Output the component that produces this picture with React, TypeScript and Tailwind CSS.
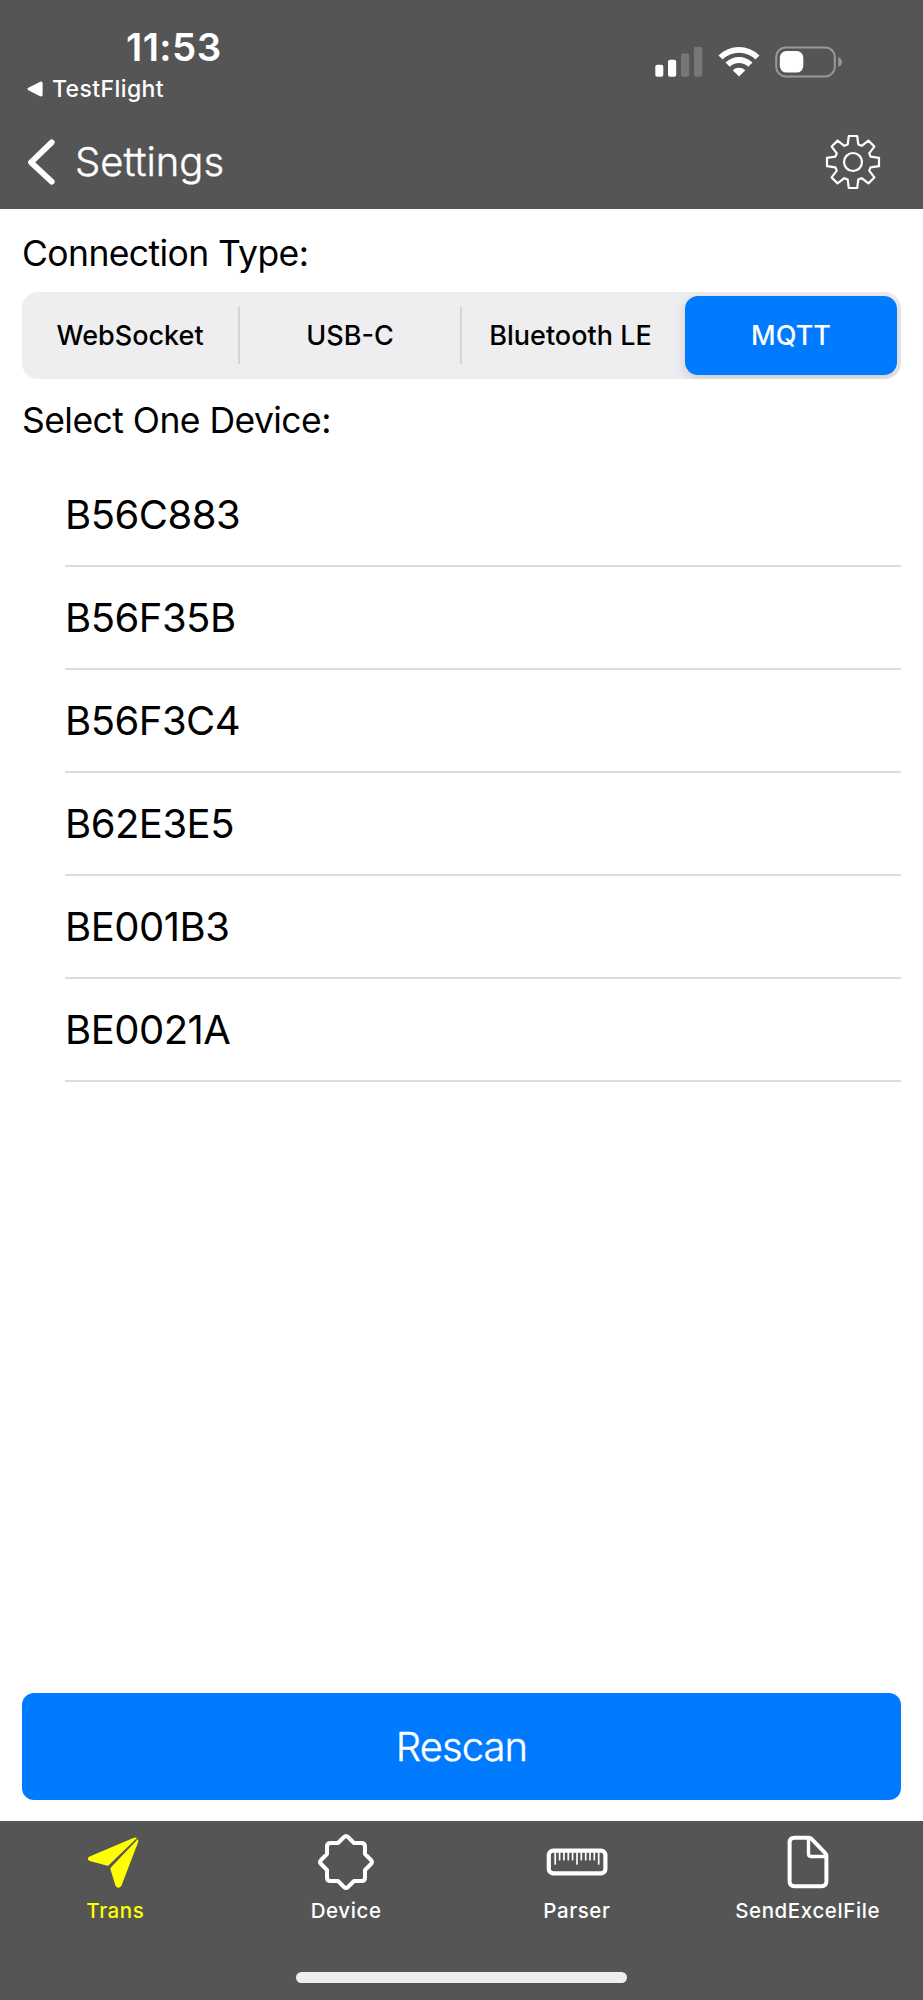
import { useState } from 'react';
import clsx from 'clsx';

const connectionTypes = [
  { name: 'WebSocket', width: 'w-[218px]' },
  { name: 'USB-C', width: 'w-[222px]' },
  { name: 'Bluetooth LE', width: 'w-[223px] pr-[6px]' },
  { name: 'MQTT', width: 'w-[212px]' },
];

const devices = ['B56C883', 'B56F35B', 'B56F3C4', 'B62E3E5', 'BE001B3', 'BE0021A'];

const toothPoints = [
  [-5.3, -17.6],
  [-4.2, -26],
  [4.2, -26],
  [5.3, -17.6],
];

// eight identical teeth, rotated 45 degrees each
const gearPoints = Array.from({ length: 8 })
  .flatMap((_, i) => {
    const a = (i * Math.PI) / 4;
    return toothPoints.map(
      ([x, y]) =>
        `${(x * Math.cos(a) - y * Math.sin(a)).toFixed(2)},${(x * Math.sin(a) + y * Math.cos(a)).toFixed(2)}`
    );
  })
  .join(' ');

function GearIcon() {
  return (
    <svg width="56" height="56" viewBox="-28 -28 56 56" fill="none" stroke="white" strokeWidth="2.2">
      <polygon points={gearPoints} strokeLinejoin="round" />
      <circle r="9" />
    </svg>
  );
}

function SignalIcon() {
  return (
    <svg width="48" height="31" viewBox="0 0 48 31" fill="white">
      <rect x="0.3" y="18.8" width="8" height="12" rx="2" />
      <rect x="13" y="13.8" width="8.2" height="17" rx="2" />
      <rect x="26" y="7.5" width="8.2" height="23.3" rx="2" opacity="0.2" />
      <rect x="39" y="0.8" width="8.2" height="30" rx="2" opacity="0.2" />
    </svg>
  );
}

function WifiIcon() {
  return (
    <svg width="42" height="31" viewBox="0 0 42 31" fill="white">
      <path d="M0.5 9.4A29.5 29.5 0 0 1 41.5 9.4L37.4 13.5A23.5 23.5 0 0 0 4.6 13.5Z" />
      <path d="M7.5 16.4A19.6 19.6 0 0 1 34.5 16.4L30.2 20.7A13.6 13.6 0 0 0 11.8 20.7Z" />
      <path d="M14.7 24.2A9.2 9.2 0 0 1 27.3 24.2L21 30.6Z" />
    </svg>
  );
}

function BatteryIcon() {
  return (
    <svg width="68" height="32" viewBox="0 0 68 32">
      <rect x="1.2" y="1.4" width="58.6" height="29" rx="9.5" fill="none" stroke="#999" strokeWidth="2" />
      <rect x="4.8" y="5" width="23.5" height="21.6" rx="6.5" fill="white" />
      <path d="M63.3 11V21C65.6 20 67 18 67 16S65.6 12 63.3 11Z" fill="#999" />
    </svg>
  );
}

function TransIcon() {
  return (
    <svg width="56" height="56" viewBox="1.5 0 56 56" fill="currentColor">
      <path d="M4.2 22.5L47.2 4.3Q50.7 2.9 51.5 4L23.2 31.2Q22.4 32 21 31.6L5.2 27.2C1.6 26 1.6 23.7 4.2 22.5Z" />
      <path d="M52.4 5Q53.5 6.3 52.3 9L36.3 50.8C35 54.5 31 54.6 29.8 51L25 35.6Q24.6 34.2 25.6 33.2Z" />
    </svg>
  );
}

function DeviceIcon() {
  return (
    <svg width="60" height="60" viewBox="-30 -30 60 60" fill="none" stroke="currentColor" strokeWidth="4">
      <path
        strokeLinejoin="round"
        d="M-2 -25Q0 -26.8 2 -25L8 -19H15.5Q19 -19 19 -15.5V-8L25 -2Q26.8 0 25 2L19 8V15.5Q19 19 15.5 19H8L2 25Q0 26.8 -2 25L-8 19H-15.5Q-19 19 -19 15.5V8L-25 2Q-26.8 0 -25 -2L-19 -8V-15.5Q-19 -19 -15.5 -19H-8Z"
      />
    </svg>
  );
}

function ParserIcon() {
  return (
    <svg width="62" height="28" viewBox="0 0 62 28" fill="none" stroke="currentColor" strokeLinecap="round">
      <rect x="2.8" y="2.6" width="56.6" height="22.8" rx="4.5" strokeWidth="4.2" />
      <path
        strokeWidth="1.7"
        d="M9.2 4V16M13.6 4V11.7M17.9 4V11.7M22.3 4V11.7M26.6 4V11.7M31 4V16M35.3 4V11.7M39.7 4V11.7M44 4V11.7M48.3 4V11.7M52.7 4V16"
      />
    </svg>
  );
}

function FileIcon() {
  return (
    <svg width="42" height="54" viewBox="0 0 42 54" fill="none" stroke="currentColor" strokeWidth="4" strokeLinejoin="round">
      <path d="M21.5 2.8H7.5Q2.6 2.8 2.6 7.7V46.3Q2.6 51.2 7.5 51.2H34.5Q39.4 51.2 39.4 46.3V21Q39.4 19.2 38 17.8L25 4.4Q23.5 2.8 21.5 2.8Z" />
      <path d="M21.5 4V18.5Q21.5 21.5 24.5 21.5H39" strokeWidth="3.4" />
    </svg>
  );
}

const tabs = [
  { label: 'Trans', icon: TransIcon },
  { label: 'Device', icon: DeviceIcon },
  { label: 'Parser', icon: ParserIcon },
  { label: 'SendExcelFile', icon: FileIcon },
];

function StatusBar() {
  return (
    <div className="flex h-[114px] justify-between pr-[80px] pl-[27px]">
      <div className="flex flex-col">
        <div className="mt-[23px] pl-[99px] text-[38.5px] leading-[48px] font-semibold tracking-[0.4px]">11:53</div>
        <div className="mt-px flex items-center gap-[9px] text-[23px] leading-[34px] font-medium tracking-[0.4px]">
          <svg width="16" height="16" viewBox="0 0 16 16" fill="white">
            <path d="M1.3 6.8L13.2 0.8Q15.6 0 15.6 2.3V13.7Q15.6 16 13.2 15.2L1.3 9.2Q-0.4 8 1.3 6.8Z" />
          </svg>
          TestFlight
        </div>
      </div>
      <div className="mt-[46px] flex h-8 items-start">
        <SignalIcon />
        <div className="ml-[15px]">
          <WifiIcon />
        </div>
        <div className="ml-[15px]">
          <BatteryIcon />
        </div>
      </div>
    </div>
  );
}

export default function App() {
  const [selected, setSelected] = useState('MQTT');
  const [activeTab, setActiveTab] = useState('Trans');

  return (
    <div className="flex h-[2000px] w-[923px] flex-col overflow-hidden bg-white font-['Inter',sans-serif] text-black">
      <header className="h-[209px] shrink-0 bg-[#555] text-white">
        <StatusBar />
        <div className="flex h-24 items-center justify-between pr-[42px] pl-[27px]">
          <button className="flex items-center gap-[20px]">
            <svg width="28" height="46" viewBox="-0.5 0 28 46" fill="none" stroke="white" strokeWidth="5.8" strokeLinecap="round" strokeLinejoin="round">
              <path d="M24.2 3.3L3.5 23.3L24.2 42.7" />
            </svg>
            <span className="text-[40px] leading-[50px] font-light [-webkit-text-stroke:0.4px_white]">Settings</span>
          </button>
          <button aria-label="Preferences">
            <GearIcon />
          </button>
        </div>
      </header>

      <main className="flex flex-1 flex-col px-[22px] pb-[21px]">
        <h2 className="mt-[23px] text-[35.5px] leading-[44px] tracking-[-0.6px]">Connection Type:</h2>
        <div className="mt-[16px] flex h-[87px] items-center overflow-hidden rounded-[16px] bg-[#eeeef0] pr-1">
          {connectionTypes.map(({ name, width }, i) => (
            <button
              key={name}
              onClick={() => setSelected(name)}
              className={clsx(
                'flex items-center justify-center pt-[2px] text-[27px] font-medium',
                width,
                selected === name
                  ? 'h-[79px] rounded-[13px] bg-[#007aff] text-white shadow-[0_4px_12px_rgba(0,0,0,0.15)]'
                  : 'h-[57px]',
                i < 2 && 'border-r-2 border-[#d5d5d8]'
              )}
            >
              {name}
            </button>
          ))}
        </div>
        <h2 className="mt-[20px] text-[35.5px] leading-[44px] tracking-[-0.55px]">Select One Device:</h2>

        <ul className="mt-[21px] ml-[43px]">
          {devices.map((device) => (
            <li
              key={device}
              className="flex h-[103px] items-center border-b-2 border-[#dcdcde] text-[40px] tracking-[-0.5px]"
            >
              {device}
            </li>
          ))}
        </ul>

        <button className="mt-auto h-[107px] rounded-[12px] bg-[#007aff] text-[40px] font-light tracking-[-0.9px] text-white [-webkit-text-stroke:0.4px_white]">
          Rescan
        </button>
      </main>

      <nav className="flex h-[179px] shrink-0 flex-col items-center bg-[#555] text-white">
        <div className="flex w-full">
          {tabs.map(({ label, icon: Icon }) => (
            <button
              key={label}
              onClick={() => setActiveTab(label)}
              className={clsx('flex flex-1 basis-0 flex-col items-center', activeTab === label && 'text-[#ff0]')}
            >
              <span className="flex h-[82px] items-center justify-center">
                <Icon />
              </span>
              <span className="-mt-[5px] text-[20.5px] leading-[26px] font-medium tracking-[0.6px]">{label}</span>
            </button>
          ))}
        </div>
        <div className="mt-auto mb-[17px] h-[11px] w-[331px] rounded-full bg-[#eee]" />
      </nav>
    </div>
  );
}
